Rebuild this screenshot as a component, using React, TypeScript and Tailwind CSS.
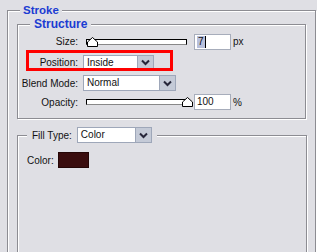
import React from 'react';

const Chevron = () => (
  <svg width="9" height="7" viewBox="0 0 9 7">
    <polyline points="1,1.5 4.5,5 8,1.5" fill="none" stroke="#26263a" strokeWidth="2" />
  </svg>
);

const Select: React.FC<{ value: string; width: string }> = ({ value, width }) => (
  <div className={`${width} h-[16px] flex bg-white border border-[#9ea7b9]`}>
    <div className="flex-1 pl-[3px] leading-[14px]">{value}</div>
    <div className="w-[16px] h-full flex items-center justify-center bg-[#c4cad7] border-l border-[#9ea7b9]">
      <Chevron />
    </div>
  </div>
);

const Thumb = () => (
  <svg width="11" height="10" viewBox="0 0 11 10">
    <polygon points="0.5,9.5 0.5,5 5.5,0.5 10.5,5 10.5,9.5" fill="#fff" stroke="#000" />
  </svg>
);

const Slider: React.FC<{ pos: 'start' | 'end' }> = ({ pos }) => (
  <div className="relative w-[101px] h-[6px] bg-white border border-black border-b-[#888]">
    <div className={`absolute top-[-3px] ${pos === 'start' ? 'left-[0px]' : 'left-[95px]'}`}>
      <Thumb />
    </div>
  </div>
);

const Label: React.FC<{ text: string }> = ({ text }) => (
  <div className="w-[61px] text-right pr-[1px] whitespace-nowrap">{text}</div>
);

const etched = 'border border-[#8c8c92] shadow-[inset_1px_1px_0_#fff,1px_1px_0_#fff]';

export default function App() {
  return (
    <div className="w-[317px] h-[252px] overflow-hidden bg-[#dfdfe4] font-['Liberation_Sans',Arial,sans-serif] text-[10px] text-[#111]">
      <fieldset className={`mt-[3px] ml-[7px] w-[309px] h-[290px] ${etched}`}>
        <legend className="ml-[12px] px-[3px] h-[14px] leading-[14px] bg-[#dfdfe4] font-bold text-[#1b3cd2] text-[11.5px]">
          Stroke
        </legend>

        {/* Structure */}
        <fieldset className={`ml-[9px] w-[289px] ${etched}`}>
          <legend className="ml-[12px] px-[4px] h-[14px] leading-[14px] bg-[#dfdfe4] font-bold text-[#1b3cd2] text-[12px]">
            Structure
          </legend>
          <div className="flex items-center h-[21px]">
            <Label text="Size:" />
            <div className="ml-[7px]"><Slider pos="start" /></div>
            <div className="ml-[7px] w-[37px] h-[16px] bg-white border border-[#a7adbb] pl-[2px] flex items-center">
              <span className="bg-[#b8c0dc] px-[1px] leading-[12px]">7</span>
              <span className="w-[1px] h-[12px] bg-black" />
            </div>
            <span className="ml-[2px]">px</span>
          </div>
          <div className="relative flex items-center h-[21px]">
            <Label text="Position:" />
            <div className="ml-[4px]"><Select value="Inside" width="w-[71px]" /></div>
            <div className="absolute left-[8px] top-[-2px] w-[147px] h-[21px] border-[3px] border-[#ff0000]" />
          </div>
          <div className="flex items-center h-[20px]">
            <Label text="Blend Mode:" />
            <div className="ml-[4px]"><Select value="Normal" width="w-[93px]" /></div>
          </div>
          <div className="flex items-center h-[18px] mb-[7px]">
            <Label text="Opacity:" />
            <div className="ml-[7px]"><Slider pos="end" /></div>
            <div className="ml-[7px] w-[37px] h-[16px] bg-white border border-[#a7adbb] pl-[2px] leading-[14px]">100</div>
            <span className="ml-[2px]">%</span>
          </div>
        </fieldset>

        {/* Fill */}
        <fieldset className={`mt-[8px] ml-[9px] w-[290px] h-[150px] ${etched}`}>
          <legend className="ml-[9px] px-[5px] h-[16px] bg-[#dfdfe4]">
            <div className="flex items-center gap-[5px]">
              <span>Fill Type:</span>
              <Select value="Color" width="w-[75px]" />
            </div>
          </legend>
          <div className="flex items-center mt-[9px] ml-[9px] gap-[4px]">
            <span>Color:</span>
            <div className="w-[31px] h-[16px] bg-[#3a0d0e] border border-[#240606]" />
          </div>
        </fieldset>
      </fieldset>
    </div>
  );
}
